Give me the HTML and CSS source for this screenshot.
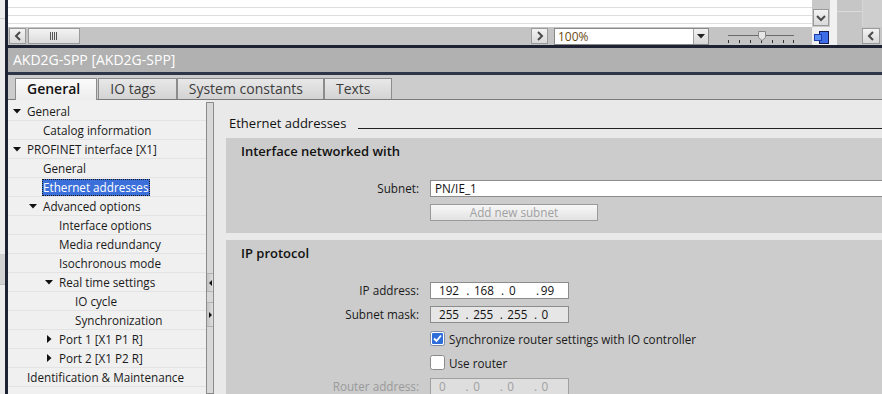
FILE: index.html
```html
<!DOCTYPE html>
<html>
<head>
<meta charset="utf-8">
<title>AKD2G-SPP</title>
<link rel="stylesheet" href="styles.css">
</head>
<body>
<div class="app">
  <div class="edge">
    <div class="edge-a"></div>
    <div class="edge-b"></div>
    <div class="edge-c"></div>
    <div class="edge-d"></div>
  </div>
  <div class="vline"></div>
  <div class="main">
    <div class="top">
      <div class="canvas">
        <div class="lines"><div></div><div></div><div></div></div>
        <div class="hscroll">
          <div class="sbtn first"><svg width="8" height="10" viewBox="0 0 8 10"><path d="M6 1L2 5l4 4" stroke="#4a4a4a" stroke-width="2" fill="none"/></svg></div>
          <div class="thumb"><svg width="9" height="8" viewBox="0 0 9 8"><path d="M0.5 0v8M2.5 0v8M4.5 0v8M6.5 0v8" stroke="#555" stroke-width="1"/></svg></div>
          <div class="track"></div>
          <div class="sbtn"><svg width="8" height="10" viewBox="0 0 8 10"><path d="M2 1l4 4-4 4" stroke="#4a4a4a" stroke-width="2" fill="none"/></svg></div>
          <div class="combo">
            <span class="combo-text">100%</span>
            <span class="combo-btn"><svg width="8" height="5" viewBox="0 0 8 5"><path d="M0 0h8L4 4.5z" fill="#222"/></svg></span>
          </div>
          <div class="slider">
            <svg width="66" height="17" viewBox="0 0 66 17">
              <path d="M0 7.5h66" stroke="#6a6a6a" stroke-width="1"/>
              <path d="M0.5 12v3M11.5 12v3M22.5 12v3M33.5 12v3M44.5 12v3M55.5 12v3M65.5 12v3" stroke="#333" stroke-width="1"/>
              <path d="M30.5 3.5h7v6l-3.5 3-3.5-3z" fill="#e6e6e6" stroke="#8a8a8a" stroke-width="1"/>
            </svg>
          </div>
          <div class="tail"></div>
        </div>
      </div>
      <div class="vcol">
        <div class="vcol-top"><div class="sbtn vbtn"><svg width="10" height="8" viewBox="0 0 10 8"><path d="M1 2l4 4 4-4" stroke="#4a4a4a" stroke-width="2" fill="none"/></svg></div></div>
        <div class="vcol-bot">
          <svg width="17" height="15" viewBox="0 0 17 15">
            <rect x="6.5" y="1.5" width="9" height="12" fill="#3d6ce6" stroke="#141c55" stroke-width="1"/>
            <rect x="1.5" y="4.5" width="7" height="6" fill="#5b8ff8" stroke="#1b3bb0" stroke-width="1"/>
          </svg>
        </div>
      </div>
      <div class="lightcol"></div>
      <div class="cells">
        <div class="cells-top"><div class="cell-a"></div><div class="cell-b"></div></div>
        <div class="cells-bot"><div class="sbtn rbtn"><svg width="8" height="10" viewBox="0 0 8 10"><path d="M6 1L2 5l4 4" stroke="#4a4a4a" stroke-width="2" fill="none"/></svg></div></div>
      </div>
    </div>
    <div class="darkbar"></div>
    <div class="titlebar">AKD2G-SPP [AKD2G-SPP]</div>
    <div class="darkbar2"></div>
    <div class="tabbar">
      <div class="tab active">General</div>
      <div class="tab">IO tags</div>
      <div class="tab">System constants</div>
      <div class="tab">Texts</div>
    </div>
    <div class="body">
      <div class="tree">
        <div class="row l0"><span class="arr"><svg width="8" height="5" viewBox="0 0 8 5"><path d="M0 0h8L4 4.5z" fill="#111"/></svg></span><span class="lbl">General</span></div>
        <div class="row l1"><span class="arr"></span><span class="lbl">Catalog information</span></div>
        <div class="row l0"><span class="arr"><svg width="8" height="5" viewBox="0 0 8 5"><path d="M0 0h8L4 4.5z" fill="#111"/></svg></span><span class="lbl">PROFINET interface [X1]</span></div>
        <div class="row l1"><span class="arr"></span><span class="lbl">General</span></div>
        <div class="row l1"><span class="arr"></span><span class="lbl sel">Ethernet addresses</span></div>
        <div class="row l1"><span class="arr"><svg width="8" height="5" viewBox="0 0 8 5"><path d="M0 0h8L4 4.5z" fill="#111"/></svg></span><span class="lbl">Advanced options</span></div>
        <div class="row l2"><span class="arr"></span><span class="lbl">Interface options</span></div>
        <div class="row l2"><span class="arr"></span><span class="lbl">Media redundancy</span></div>
        <div class="row l2"><span class="arr"></span><span class="lbl">Isochronous mode</span></div>
        <div class="row l2"><span class="arr"><svg width="8" height="5" viewBox="0 0 8 5"><path d="M0 0h8L4 4.5z" fill="#111"/></svg></span><span class="lbl">Real time settings</span></div>
        <div class="row l3"><span class="arr"></span><span class="lbl">IO cycle</span></div>
        <div class="row l3"><span class="arr"></span><span class="lbl">Synchronization</span></div>
        <div class="row l2"><span class="arr right"><svg width="5" height="8" viewBox="0 0 5 8"><path d="M0 0v8l4.5-4z" fill="#111"/></svg></span><span class="lbl">Port 1 [X1 P1 R]</span></div>
        <div class="row l2"><span class="arr right"><svg width="5" height="8" viewBox="0 0 5 8"><path d="M0 0v8l4.5-4z" fill="#111"/></svg></span><span class="lbl">Port 2 [X1 P2 R]</span></div>
        <div class="row l0"><span class="arr"></span><span class="lbl">Identification &amp; Maintenance</span></div>
      </div>
      <div class="splitter">
        <div class="split-btn b1"><svg width="3" height="6" viewBox="0 0 3 6"><path d="M3 0v6L0 3z" fill="#111"/></svg></div>
        <div class="split-btn b2"><svg width="3" height="6" viewBox="0 0 3 6"><path d="M0 0v6l3-3z" fill="#111"/></svg></div>
      </div>
      <div class="content">
        <div class="ctitle"><span>Ethernet addresses</span><div class="rule"></div></div>
        <div class="section s1">
          <div class="stitle">Interface networked with</div>
          <div class="form f1">
            <label class="flbl">Subnet:</label>
            <div class="input wide">PN/IE_1</div>
            <span></span>
            <div class="btn">Add new subnet</div>
          </div>
        </div>
        <div class="section s2">
          <div class="stitle">IP protocol</div>
          <div class="form f2">
            <label class="flbl">IP address:</label>
            <div class="input ip"><span class="oct">192</span><span class="dot">.</span><span class="oct">168</span><span class="dot">.</span><span class="oct">0</span><span class="dot">.</span><span class="oct tight">99</span></div>
            <label class="flbl">Subnet mask:</label>
            <div class="input ip grey"><span class="oct">255</span><span class="dot">.</span><span class="oct">255</span><span class="dot">.</span><span class="oct">255</span><span class="dot">.</span><span class="oct">0</span></div>
            <span></span>
            <div class="check"><svg width="15" height="15" viewBox="0 0 15 15"><rect x="0.5" y="0.5" width="14" height="14" rx="2" fill="#fff" stroke="#7d8aa3"/><rect x="2" y="2" width="11" height="11" rx="1" fill="#2f6ed8"/><path d="M4 7.5l2.5 2.5 4.5-5.5" stroke="#fff" stroke-width="1.8" fill="none"/></svg><span>Synchronize router settings with IO controller</span></div>
            <span></span>
            <div class="check"><svg width="15" height="15" viewBox="0 0 15 15"><rect x="0.5" y="0.5" width="14" height="14" rx="2" fill="#fff" stroke="#8a8a8a"/></svg><span>Use router</span></div>
            <label class="flbl dis">Router address:</label>
            <div class="input ip dis"><span class="oct">0</span><span class="dot">.</span><span class="oct">0</span><span class="dot">.</span><span class="oct">0</span><span class="dot">.</span><span class="oct">0</span></div>
          </div>
        </div>
      </div>
    </div>
  </div>
</div>
</body>
</html>
```
FILE: styles.css
```css
* { box-sizing: border-box; margin: 0; padding: 0; }
html, body { width: 882px; height: 394px; overflow: hidden; }
body {
  font-family: "Open Sans", "Noto Sans", sans-serif;
  font-size: 11.7px;
  color: #161616;
  background: #ececec;
}
.app { display: flex; height: 394px; overflow: hidden; }

.edge { width: 5px; background: #ececec; display: flex; flex-direction: column; }
.edge-a { height: 19px; border-bottom: 1px solid #cfcfcf; }
.edge-b { height: 236px; border-bottom: 1px solid #cfcfcf; }
.edge-c { height: 30px; background: #d2d2d2; border-bottom: 1px solid #bdbdbd; }
.edge-d { flex: 1; }
.vline { width: 3px; background: #1e2233; }

.main { flex: 1; display: flex; flex-direction: column; min-width: 0; min-height: 0; }

/* top strip */
.top { display: flex; height: 45px; flex-shrink: 0; }
.canvas { width: 804px; display: flex; flex-direction: column; }
.lines { height: 27px; background: #fff; }
.lines div { height: 8px; border-bottom: 1px solid #dedede; }
.hscroll { height: 18px; background: #c4c4c4; display: flex; align-items: flex-start; padding-top: 1px; }
.sbtn {
  width: 17px; height: 16px;
  border: 1px solid #9a9a9a;
  background: linear-gradient(#f3f3f3, #d9d9d9);
  display: flex; align-items: center; justify-content: center;
}
.sbtn.first { margin-left: 1px; }
.thumb {
  width: 52px; height: 16px; margin-left: 2px;
  border: 1px solid #9a9a9a;
  background: linear-gradient(#f3f3f3, #dcdcdc);
  display: flex; align-items: center; justify-content: center;
}
.track { flex: 1; }
.combo {
  width: 155px; height: 17px; margin-left: 6px;
  background: #fff; border: 1px solid #8a8a8a;
  display: flex; align-items: center;
}
.combo-text { flex: 1; padding-left: 3px; color: #6b4a12; font-size: 12px; line-height: 15px; }
.combo-btn {
  width: 15px; height: 15px;
  border-left: 1px solid #a0a0a0;
  background: linear-gradient(#f2f2f2, #d6d6d6);
  display: flex; align-items: center; justify-content: center;
}
.slider { width: 66px; height: 17px; margin-left: 19px; }
.slider svg { display: block; }
.tail { width: 18px; }

.vcol { width: 18px; display: flex; flex-direction: column; }
.vcol-top { height: 27px; background: #c8c8c8; padding: 9px 0 0 1px; }
.vbtn { width: 16px; height: 17px; }
.vcol-bot { height: 18px; background: #f0f0f0; display: flex; align-items: center; justify-content: center; padding-top: 2px; }
.lightcol { width: 7px; background: #f1f1f1; }
.cells { flex: 1; background: #c6c6c6; display: flex; flex-direction: column; }
.cells-top { height: 27px; display: flex; }
.cell-a { width: 25px; border-bottom: 1px solid #dcdcdc; height: 12px; }
.cell-b { flex: 1; border-left: 1px solid #d6d6d6; background: #cecece; }
.cells-bot { height: 18px; padding: 1px 0 0 25px; }
.rbtn { width: 18px; }

.darkbar { height: 3px; background: #1e2233; flex-shrink: 0; }
.titlebar {
  height: 24px; background: #b1b1b1; color: #fff; flex-shrink: 0;
  font-size: 14px; line-height: 24px; padding-left: 5px;
}
.darkbar2 { height: 3px; background: #2f3549; flex-shrink: 0; }

.tabbar {
  height: 25px; background: #cccccc; flex-shrink: 0;
  border-bottom: 1px solid #7a7a7a;
  display: flex; align-items: flex-end; padding-left: 7px;
}
.tab {
  height: 21px; padding: 0 20px 0 11px;
  border: 1px solid #8c8c8c; border-bottom: none;
  background: linear-gradient(#e8e8e8, #d3d3d3);
  color: #3c3c3c; font-size: 14px; line-height: 20px;
}
.tab.active {
  height: 22px; margin-bottom: -1px; margin-right: 1px;
  padding: 0 16px 0 11px;
  background: linear-gradient(#fbfbfb, #ececec);
  color: #111; font-weight: 600;
}

/* body */
.body { flex: 1; display: flex; min-height: 0; overflow: hidden; }
.tree { width: 198px; background: #f0f0f0; padding-top: 2px; }
.row { height: 19px; border-bottom: 1px solid #e3e3e3; display: flex; align-items: center; color: #1a1a1a; }
.row.l1 { padding-left: 16px; }
.row.l2 { padding-left: 32px; }
.row.l3 { padding-left: 48px; }
.arr { width: 19px; padding-left: 5px; display: flex; align-items: center; }
.arr.right { padding-left: 7px; }
.arr svg { display: block; }
.lbl { line-height: 17px; white-space: nowrap; }
.lbl.sel {
  background: #3b6fd9; color: #fff;
  outline: 1px dotted #1a1a1a; outline-offset: -1px;
  margin-left: -1px; padding: 0 1px;
}

.splitter {
  width: 8px; margin-top: 2px;
  border: 1px solid #8c8c8c; background: #d8d8d8;
  display: flex; flex-direction: column;
}
.split-btn {
  background: linear-gradient(90deg, #c4c4c4, #dedede);
  border-top: 1px solid #b4b4b4; border-bottom: 1px solid #b4b4b4;
  display: flex; align-items: center; justify-content: center;
}
.split-btn.b1 { margin-top: 170px; height: 19px; }
.split-btn.b2 { margin-top: 10px; height: 25px; }

.content {
  flex: 1; padding: 14px 0 0 12px; background: #e9e9e9; min-width: 0;
  display: flex; flex-direction: column; overflow: hidden;
}
.ctitle { display: flex; align-items: flex-end; height: 18px; padding-left: 3px; font-size: 13px; line-height: 18px; color: #111; flex-shrink: 0; }
.ctitle span { white-space: nowrap; }
.rule { flex: 1; border-bottom: 1px solid #222; margin: 0 0 3px 12px; }

.section { background: #cccccc; flex-shrink: 0; }
.s1 { margin-top: 6px; padding: 4px 0 12px 0; }
.s2 { margin-top: 7px; padding: 4px 0 0 0; flex: 1; }
.stitle { padding-left: 15px; font-size: 13px; font-weight: 600; line-height: 18px; color: #111; }

.form {
  display: grid; grid-template-columns: 193px 1fr; grid-auto-rows: 17px;
  column-gap: 11px; row-gap: 7px; align-items: center;
}
.f1 { margin-top: 20px; }
.f2 { margin-top: 20px; }
.flbl { text-align: right; line-height: 17px; color: #1a1a1a; }
.flbl.dis { color: #9a9a9a; }

.input {
  height: 17px; background: #fff;
  border: 1px solid #8c8c8c;
  line-height: 15px; padding-left: 4px; color: #111;
}
.input.wide { border-right: none; }
.input.ip { width: 139px; padding-left: 8px; display: flex; }
.input.grey { background: #e6e6e6; }
.input.dis { background: #dedede; border-color: #a0a0a0; color: #a0a0a0; }
.oct { width: 28px; }
.oct.tight { margin-left: -3px; }
.dot { width: 8px; }

.btn {
  width: 168px; height: 17px;
  border: 1px solid #9a9a9a;
  background: linear-gradient(#f8f8f8, #e2e2e2);
  color: #a0a0a0; text-align: center; line-height: 15px;
}
.check { display: flex; align-items: center; height: 17px; }
.check svg { display: block; margin-right: 4px; }
.check span { color: #1a1a1a; }
```
